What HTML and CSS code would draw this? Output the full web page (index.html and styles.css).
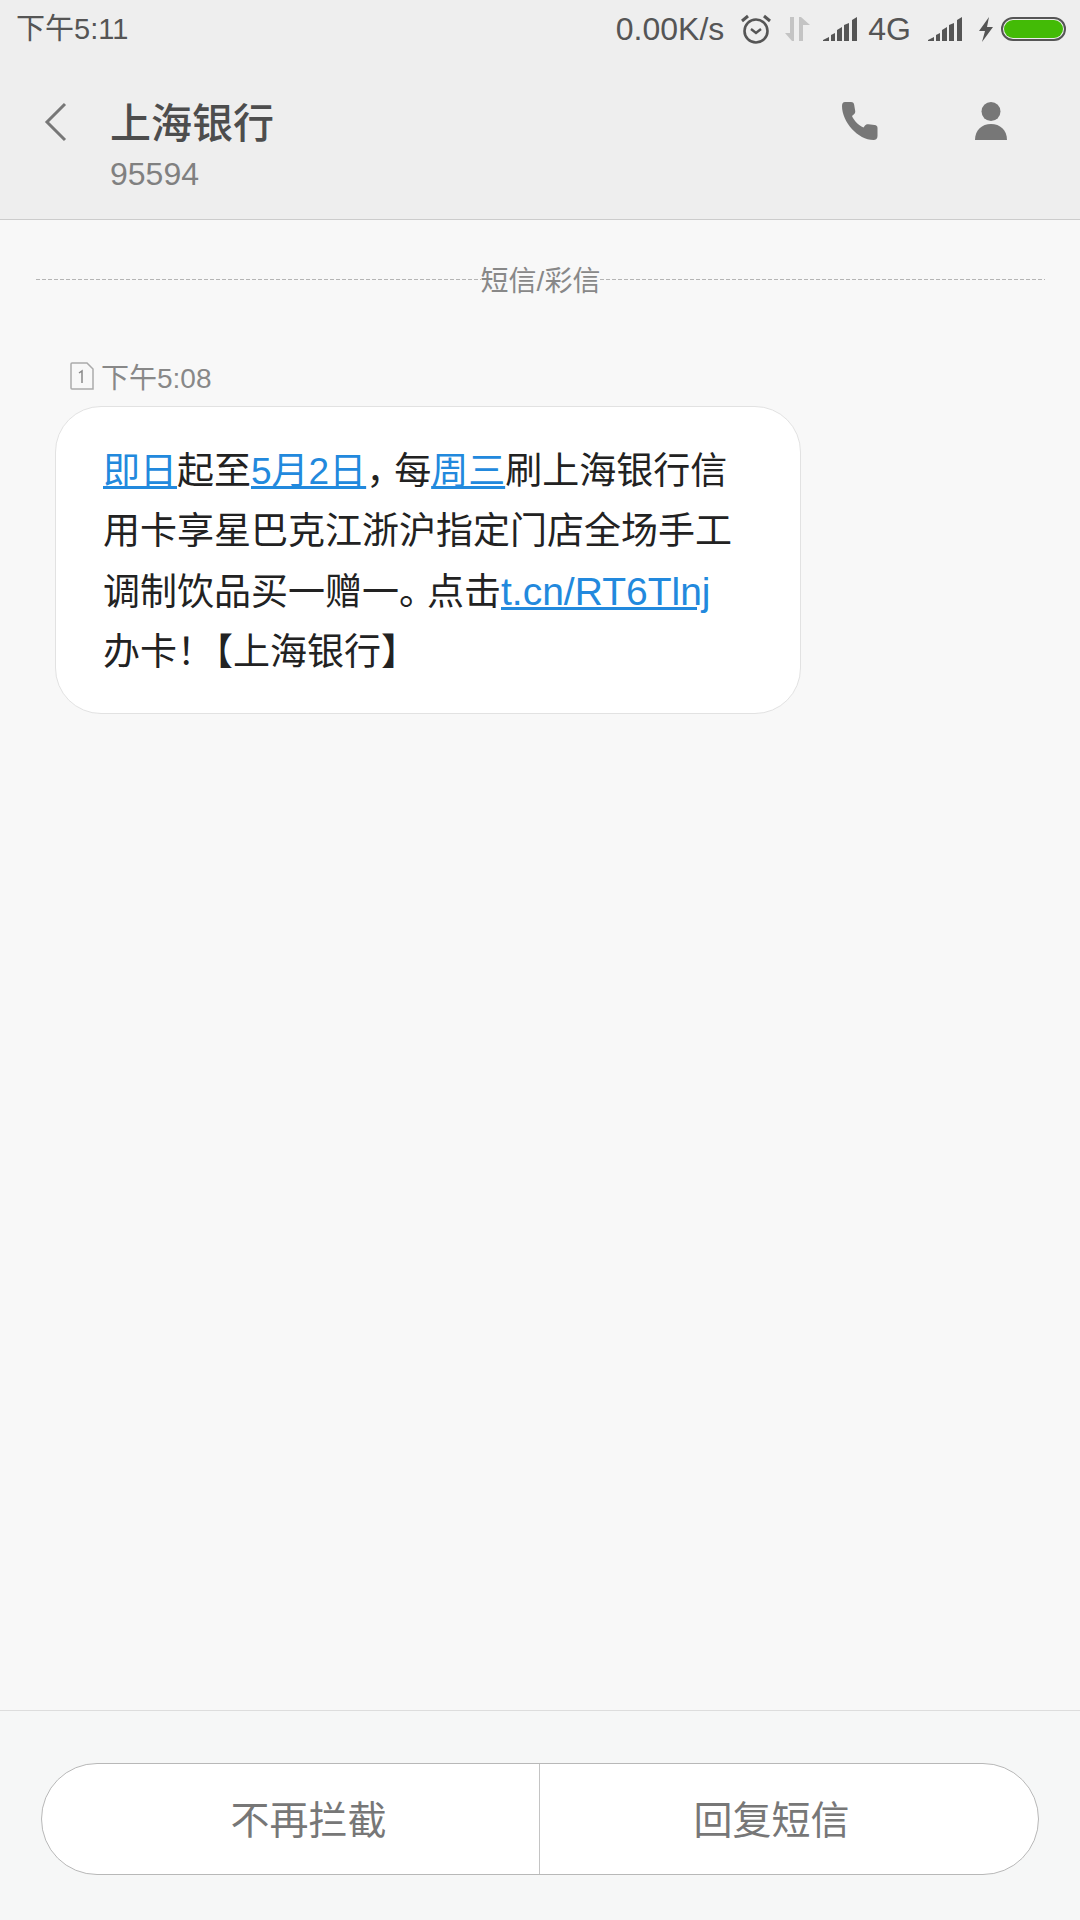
FILE: index.html
```html
<!DOCTYPE html>
<html lang="zh-CN">
<head>
    <meta charset="UTF-8">
    <meta name="viewport" content="width=device-width, initial-scale=1.0">
    <title>上海银行</title>
    <link rel="stylesheet" href="styles.css">
</head>
<body>
    <div class="phone">
        <header class="top">
            <div class="status">
                <span class="clock">下午5:11</span>
                <div class="status-right">
                    <span class="speed">0.00K/s</span>
                    <svg class="alarm" width="30" height="30" viewBox="0 0 30 30">
                        <circle cx="15" cy="17" r="11.5" fill="none" stroke="#555" stroke-width="2.6"/>
                        <path d="M10 15l5 4 5-4" fill="none" stroke="#555" stroke-width="2.4"/>
                        <path d="M1 7l6-5M29 7l-6-5" fill="none" stroke="#555" stroke-width="3"/>
                    </svg>
                    <svg class="arrows" width="27" height="26" viewBox="0 0 27 26">
                        <path d="M10 1h-4v16H1l7 8h2z" fill="#c4c4c4"/>
                        <path d="M15 25h4V9h7l-9-8h-2z" fill="#c4c4c4"/>
                    </svg>
                    <svg class="signal" width="34" height="24" viewBox="0 0 34 24">
                        <path d="M0 24v-1l6-3v4zM8 24v-6l4-2v8zM14 24V13l5-3v14zM21 24V8l5-2v18zM29 24V3l5-3v24z" fill="#555"/>
                    </svg>
                    <span class="net">4G</span>
                    <svg class="signal signal-two" width="34" height="24" viewBox="0 0 34 24">
                        <path d="M0 24v-1l6-3v4zM8 24v-6l4-2v8zM14 24V13l5-3v14zM21 24V8l5-2v18zM29 24V3l5-3v24z" fill="#555"/>
                    </svg>
                    <svg class="bolt" width="16" height="25" viewBox="0 0 16 25">
                        <path d="M11 0L1 14h6l-3 11L15 10H9z" fill="#555"/>
                    </svg>
                    <div class="battery"><div class="battery-fill"></div></div>
                </div>
            </div>
            <div class="title-bar">
                <svg class="back" width="24" height="40" viewBox="0 0 24 40">
                    <path d="M21 2L3 20l18 18" fill="none" stroke="#777" stroke-width="3"/>
                </svg>
                <div class="contact">
                    <div class="contact-name">上海银行</div>
                    <div class="contact-num">95594</div>
                </div>
                <svg class="call" width="38" height="38" viewBox="0 0 38 38">
                    <path d="M3 0h6c2 0 3 1 3.200 3l1 6c.2 1.500-.3 2.500-1.500 3.500l-1.700 1.500c2 4.500 6 9 11.500 11.500l1.500-2c1-1 2-1.500 3.500-1.300l6 .8c2 .3 3 1.300 3 3V34c0 2.500-1.500 4-4 4C16 38 0 20 0 4c0-2.500 1-4 3-4z" fill="#777"/>
                </svg>
                <svg class="person" width="32" height="38" viewBox="0 0 32 38">
                    <circle cx="16" cy="9.500" r="9.500" fill="#777"/>
                    <path d="M0 38c0-10 7-16 16-16s16 6 16 16z" fill="#777"/>
                </svg>
            </div>
        </header>

        <main class="thread">
            <div class="divider">
                <span class="divider-line"></span>
                <span class="divider-text">短信/彩信</span>
                <span class="divider-line"></span>
            </div>
            <div class="msg-time">
                <svg class="sim" width="24" height="28" viewBox="0 0 24 28">
                    <path d="M2 1h15l6 6v20H2a1 1 0 0 1-1-1V2a1 1 0 0 1 1-1z" fill="none" stroke="#aaa" stroke-width="1.500"/>
                    <path d="M9 11l3-2v12" fill="none" stroke="#888" stroke-width="1.500"/>
                </svg>
                <span>下午5:08</span>
            </div>
            <div class="bubble">
                <a href="#">即日</a>起至<a href="#">5月2日</a><span class="comma">，</span>每<a href="#">周三</a>刷上海银行信用卡享星巴克江浙沪指定门店全场手工调制饮品买一赠一<span class="comma">。</span>点击<a class="url" href="#">t.cn/RT6Tlnj</a>办卡<span class="bang">！</span>【上海银行】
            </div>
        </main>

        <footer class="bottom">
            <div class="actions">
                <button class="action action-left">不再拦截</button>
                <button class="action action-right">回复短信</button>
            </div>
        </footer>
    </div>
</body>
</html>
```

FILE: styles.css
```css
* {
    box-sizing: border-box;
}
body {
    margin: 0;
    font-family: "Liberation Sans", "Noto Sans CJK SC", sans-serif;
    background-color: #f8f8f8;
}
.phone {
    display: flex;
    flex-direction: column;
    width: 1080px;
    height: 1920px;
}

/* status bar + title */
.top {
    height: 220px;
    background-color: #eeeeee;
    border-bottom: 1px solid #cccccc;
}
.status {
    display: flex;
    justify-content: space-between;
    align-items: center;
    height: 58px;
    padding: 0 14px 0 16px;
    color: #555;
    font-size: 29px;
}
.clock {
    margin-top: -6px;
}
.status-right {
    display: flex;
    align-items: center;
}
.speed {
    margin-right: 17px;
    font-size: 32px;
}
.arrows {
    margin-left: 13px;
}
.signal {
    margin-left: 12px;
}
.net {
    margin-left: 11px;
    font-size: 32px;
}
.signal-two {
    margin-left: 17px;
}
.bolt {
    margin-left: 16px;
}
.battery {
    width: 65px;
    height: 24px;
    margin-left: 7px;
    padding: 1px;
    border: 2px solid #555;
    border-radius: 12px;
    background-color: #eeeeee;
}
.battery-fill {
    height: 100%;
    border-radius: 9px;
    background-color: #43bb06;
}
.title-bar {
    display: flex;
    align-items: flex-start;
    padding: 44px 0 0 44px;
}
.back {
    flex: none;
}
.contact {
    flex: 1;
    margin-left: 42px;
}
.contact-name {
    height: 46px;
    margin-top: -1px;
    font-size: 41px;
    font-weight: 500;
    line-height: 46px;
    color: #4d4d4d;
}
.contact-num {
    height: 40px;
    margin-top: 7px;
    font-size: 32px;
    line-height: 40px;
    color: #808080;
}
.call {
    margin-right: 95px;
}
.person {
    margin-right: 73px;
}

/* messages */
.thread {
    flex: 1;
    padding: 42px 35px 0 36px;
}
.divider {
    display: flex;
    align-items: center;
    height: 40px;
}
.divider-line {
    flex: 1;
    height: 1px;
    margin-top: -5px;
    background: repeating-linear-gradient(to right, #b5b5b5 0, #b5b5b5 4px, transparent 4px, transparent 6px);
}
.divider-text {
    font-size: 28px;
    line-height: 40px;
    color: #888;
}
.msg-time {
    display: flex;
    align-items: center;
    gap: 7px;
    height: 40px;
    margin: 54px 0 10px 34px;
    font-size: 28px;
    color: #888;
}
.bubble {
    width: 746px;
    height: 308px;
    margin-left: 19px;
    padding: 35px 61px 0 47px;
    background: white;
    border: 1px solid #e2e2e2;
    border-radius: 46px;
    font-size: 37px;
    line-height: 60px;
    color: #222;
}
.bubble a {
    color: #2289dd;
}
.bubble .url {
    font-size: 39px;
}
/* punctuation is narrower than a full cell here */
.comma {
    margin-right: -9px;
}
.bang {
    margin-right: -18px;
}

/* bottom buttons */
.bottom {
    height: 210px;
    padding: 52px 41px 0;
    background-color: #f6f7f7;
    border-top: 1px solid #dddddd;
}
.actions {
    display: flex;
    height: 112px;
    background: white;
    border: 1px solid #b8b8b8;
    border-radius: 56px;
}
.action {
    padding: 0 0 4px;
    border: none;
    background: none;
    font-family: inherit;
    font-size: 39px;
    color: #777;
}
.action-left {
    width: 497px;
    padding-left: 36px;
}
.action-right {
    flex: 1;
    padding-right: 35px;
    border-left: 1px solid #c4c4c4;
}
```
